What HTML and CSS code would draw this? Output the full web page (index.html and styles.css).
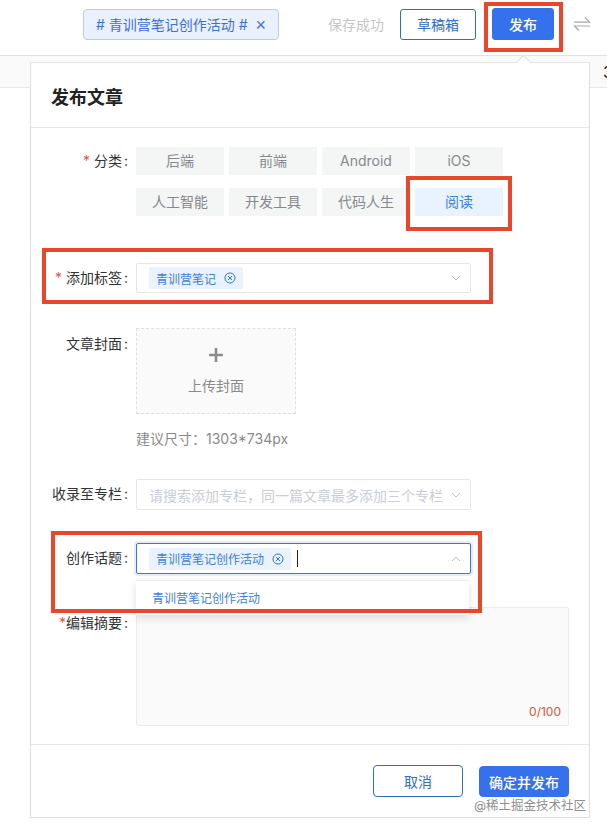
FILE: index.html
```html
<!DOCTYPE html>
<html lang="zh-CN">
<head>
    <meta charset="UTF-8">
    <meta name="viewport" content="width=device-width, initial-scale=1.0">
    <title>发布文章</title>
    <link rel="stylesheet" href="styles.css">
</head>
<body>
    <header class="topbar">
        <div class="topic-tag"># 青训营笔记创作活动 # <span class="topic-close">×</span></div>
        <span class="save-state">保存成功</span>
        <button class="btn btn-outline btn-draft">草稿箱</button>
        <button class="btn btn-primary btn-publish">发布</button>
        <svg class="swap-icon" width="18" height="16" viewBox="0 0 18 16" fill="none" stroke="#a8a8a8" stroke-width="1.2">
            <path d="M1 6.2h15.5L12 1.5"/>
            <path d="M17 10H1.5L6 14.5"/>
        </svg>
    </header>
    <div class="toolbar">3</div>

    <section class="panel">
        <div class="panel-arrow"></div>
        <h2 class="panel-title">发布文章</h2>
        <div class="panel-body">
            <div class="form-row row-category">
                <label class="form-label label-short"><span class="star">*</span> 分类<span class="colon">:</span></label>
                <div class="category-list">
                    <div class="category">后端</div>
                    <div class="category">前端</div>
                    <div class="category">Android</div>
                    <div class="category">iOS</div>
                    <div class="category">人工智能</div>
                    <div class="category">开发工具</div>
                    <div class="category">代码人生</div>
                    <div class="category active">阅读</div>
                </div>
            </div>

            <div class="form-row row-tags">
                <label class="form-label"><span class="star">*</span> 添加标签<span class="colon">:</span></label>
                <div class="select">
                    <span class="chip">青训营笔记
                        <svg class="chip-close" width="12" height="12" viewBox="0 0 12 12" fill="none" stroke="#2f74e0">
                            <circle cx="6" cy="6" r="5"/>
                            <path d="M4 4l4 4M8 4l-4 4"/>
                        </svg>
                    </span>
                    <svg class="chevron" width="10" height="6" viewBox="0 0 10 6" fill="none" stroke="#c2c6cc"><path d="M1 1l4 4 4-4"/></svg>
                </div>
            </div>

            <div class="form-row row-cover">
                <label class="form-label label-tall">文章封面<span class="colon">:</span></label>
                <div>
                    <div class="cover-upload">
                        <svg width="14" height="14" viewBox="0 0 14 14" fill="#8c8c8c"><path d="M5.7 0h2.6v5.7H14v2.6H8.3V14H5.7V8.3H0V5.7h5.7z"/></svg>
                        <span class="cover-text">上传封面</span>
                    </div>
                    <p class="cover-hint">建议尺寸：1303*734px</p>
                </div>
            </div>

            <div class="form-row">
                <label class="form-label">收录至专栏<span class="colon">:</span></label>
                <div class="select select-tall">
                    <span class="placeholder">请搜索添加专栏，同一篇文章最多添加三个专栏</span>
                    <svg class="chevron" width="10" height="6" viewBox="0 0 10 6" fill="none" stroke="#c2c6cc"><path d="M1 1l4 4 4-4"/></svg>
                </div>
            </div>

            <div class="form-row">
                <label class="form-label">创作话题<span class="colon">:</span></label>
                <div class="select select-tall select-focus">
                    <span class="chip">青训营笔记创作活动
                        <svg class="chip-close" width="12" height="12" viewBox="0 0 12 12" fill="none" stroke="#2f74e0">
                            <circle cx="6" cy="6" r="5"/>
                            <path d="M4 4l4 4M8 4l-4 4"/>
                        </svg>
                    </span>
                    <span class="caret"></span>
                    <svg class="chevron" width="10" height="6" viewBox="0 0 10 6" fill="none" stroke="#c2c6cc"><path d="M1 5l4-4 4 4"/></svg>
                    <div class="dropdown">青训营笔记创作活动</div>
                </div>
            </div>

            <div class="form-row row-summary">
                <label class="form-label label-tall"><span class="star">*</span>编辑摘要<span class="colon">:</span></label>
                <div class="summary-box"><span class="summary-count">0/100</span></div>
            </div>
        </div>
        <footer class="panel-footer">
            <button class="btn btn-outline btn-cancel">取消</button>
            <button class="btn btn-primary btn-confirm">确定并发布</button>
        </footer>
    </section>

    <div class="watermark">@稀土掘金技术社区</div>

    <!-- red annotation boxes -->
    <div class="mark mark-publish"></div>
    <div class="mark mark-read"></div>
    <div class="mark mark-tags"></div>
    <div class="mark mark-topic"></div>
</body>
</html>
```

FILE: styles.css
```css
* {
    box-sizing: border-box;
}

html, body {
    height: 100%;
}

body {
    margin: 0;
    position: relative;
    overflow: hidden;
    background: #fff;
    font-family: Inter, "Noto Sans CJK SC", sans-serif;
    font-size: 14px;
    color: #333;
}

.topbar {
    display: flex;
    align-items: center;
    height: 56px;
    padding: 0 16px 7px 83px;
    border-bottom: 1px solid #e2e2e2;
}

.topic-tag {
    width: 196px;
    height: 31px;
    line-height: 29px;
    text-align: center;
    white-space: nowrap;
    background: #e9f1fe;
    border: 1px solid #b7cdf0;
    border-radius: 4px;
    color: #3f6fd0;
    font-size: 14px;
}

.topic-close {
    margin-left: 4px;
    font-family: "Liberation Sans", sans-serif;
    font-size: 18px;
    vertical-align: -1px;
}

.save-state {
    margin-left: 49px;
    color: #c6c6c6;
}

.btn {
    font-family: inherit;
    font-size: 14px;
    border-radius: 3px;
    padding: 0;
}

.btn-outline {
    background: #fff;
    border: 1px solid #2f6fb5;
    color: #2f6fc8;
}

.btn-primary {
    background: #3671ed;
    border: 1px solid #3671ed;
    color: #fff;
    font-weight: 500;
}

.btn-draft {
    width: 76px;
    height: 31px;
    margin-left: 16px;
}

.btn-publish {
    width: 62px;
    height: 32px;
    margin-left: 16px;
}

.swap-icon {
    margin-left: 19px;
}

.toolbar {
    height: 32px;
    padding-left: 603px;
    line-height: 32px;
    background: #fafafa;
    border-bottom: 1px solid #e8e8e8;
    font-size: 16px;
    color: #222;
}

.panel {
    position: absolute;
    left: 30px;
    top: 62px;
    width: 560px;
    height: 756px;
    background: #fff;
    border: 1px solid #dedede;
    border-top-color: #e6e6e6;
}

.panel-arrow {
    position: absolute;
    left: 487px;
    top: -6px;
    width: 11px;
    height: 11px;
    background: #fff;
    border-left: 1px solid #e0e0e0;
    border-top: 1px solid #e0e0e0;
    transform: rotate(45deg);
}

.panel-title {
    margin: 0;
    height: 65px;
    padding-left: 20px;
    line-height: 70px;
    font-size: 18px;
    font-weight: 600;
    color: #222;
    border-bottom: 1px solid #e4e6e8;
}

.panel-body {
    height: 617px;
    padding-top: 19px;
    border-bottom: 1px solid #e4e6e8;
}

.form-row {
    position: relative;
    display: flex;
    margin-bottom: 33px;
}

.row-category {
    margin-bottom: 47px;
}

.row-tags {
    margin-bottom: 35px;
}

.row-cover {
    margin-bottom: 30px;
}

.form-label {
    flex: none;
    width: 97px;
    margin-right: 8px;
    line-height: 30px;
    text-align: right;
    white-space: nowrap;
    color: #333;
}

.label-short {
    line-height: 28px;
}

.label-tall {
    line-height: 32px;
}

.colon {
    margin-left: 2px;
}

.star {
    color: #e0534a;
}

.category-list {
    display: grid;
    grid-template-columns: repeat(4, 88px);
    grid-auto-rows: 28px;
    gap: 13px 5px;
}

.category {
    line-height: 28px;
    text-align: center;
    background: #f4f5f5;
    color: #86898e;
}

.category.active {
    background: #e8f3ff;
    color: #3b7fe0;
}

.select {
    position: relative;
    display: flex;
    align-items: center;
    width: 335px;
    height: 30px;
    padding: 0 12px;
    background: #fff;
    border: 1px solid #e4e6e8;
    border-radius: 2px;
}

.select-tall {
    height: 31px;
}

.select-focus {
    border-color: #3a78c9;
    box-shadow: 0 0 0 2px #e3eefc;
}

.chip {
    display: flex;
    align-items: center;
    height: 22px;
    padding: 0 7px;
    background: #e9f2fd;
    border-radius: 2px;
    font-size: 12px;
    color: #3d7fd9;
    white-space: nowrap;
}

.chip-close {
    margin-left: 8px;
}

.caret {
    width: 1px;
    height: 17px;
    margin-left: 6px;
    background: #222;
}

.chevron {
    position: absolute;
    right: 9px;
    top: 50%;
    margin-top: -3px;
}

.placeholder {
    color: #c9cdd4;
    white-space: nowrap;
}

.dropdown {
    position: absolute;
    left: -1px;
    top: 36px;
    width: 333px;
    height: 35px;
    padding-left: 16px;
    line-height: 35px;
    background: #fff;
    border-top: 1px solid #eee;
    box-shadow: 0 3px 8px rgba(0, 0, 0, 0.12);
    font-size: 12px;
    color: #3d7fd9;
    z-index: 2;
}

.cover-upload {
    display: flex;
    flex-direction: column;
    align-items: center;
    width: 160px;
    height: 86px;
    padding-top: 19px;
    background: #fafafa;
    border: 1px dashed #e0e0e0;
}

.cover-text {
    margin-top: 14px;
    line-height: 20px;
    color: #8a8a8a;
}

.cover-hint {
    margin: 15px 0 0;
    line-height: 20px;
    color: #8a8a8a;
}

.summary-box {
    position: relative;
    width: 433px;
    height: 119px;
    background: #fafafa;
    border: 1px solid #ececec;
    border-radius: 2px;
}

.summary-count {
    position: absolute;
    right: 7px;
    bottom: 6px;
    font-size: 12px;
    color: #d2553f;
}

.panel-footer {
    display: flex;
    justify-content: flex-end;
    gap: 16px;
    padding: 20px 20px 0 0;
}

.btn-cancel {
    width: 90px;
    height: 32px;
    border-radius: 4px;
}

.btn-confirm {
    width: 90px;
    height: 31px;
    margin-top: 1px;
    border-radius: 4px;
}

.watermark {
    position: absolute;
    left: 474px;
    top: 797px;
    line-height: 18px;
    font-size: 12.5px;
    color: #8f8f8f;
}

.mark {
    position: absolute;
    border: 4px solid #e8472b;
    z-index: 5;
}

.mark-publish {
    left: 484px;
    top: 2px;
    width: 79px;
    height: 50px;
}

.mark-read {
    left: 406px;
    top: 176px;
    width: 106px;
    height: 55px;
}

.mark-tags {
    left: 42px;
    top: 248px;
    width: 451px;
    height: 56px;
}

.mark-topic {
    left: 51px;
    top: 531px;
    width: 431px;
    height: 82px;
}
```
